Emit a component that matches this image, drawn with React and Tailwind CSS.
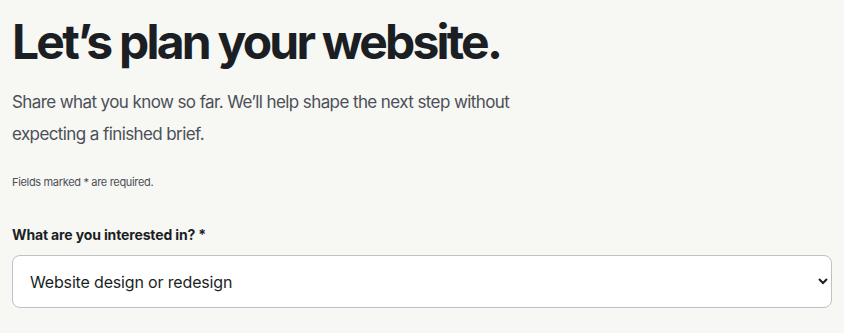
export default function App() {
  return (
    <div
      className="min-h-screen bg-[#f7f7f3] px-3 pt-[12px] text-[#1b1f24]"
      style={{ fontFamily: "Inter, 'Noto Sans', sans-serif" }}
    >
      {/* Heading */}
      <h1 className="text-[48px] font-bold leading-[60px] tracking-[-0.058em]">
        Let’s plan your website.
      </h1>

      {/* Intro */}
      <p className="mt-[14px] max-w-[560px] text-[17px] leading-[32px] tracking-[-0.035em] text-[#4b5058]">
        Share what you know so far. We’ll help shape the next step without
        expecting a finished brief.
      </p>

      <p className="mt-[24px] text-[11px] leading-[16px] tracking-[-0.03em] text-[#4b5058]">
        Fields marked * are required.
      </p>

      {/* Interest select */}
      <div className="mt-[36px]">
        <label className="block text-[14px] font-bold leading-[18px] tracking-[-0.01em] text-[#1b1f24]">
          What are you interested in? *
        </label>
        <select className="mt-[11px] h-[53px] w-full rounded-lg border border-[#bfc2c0] bg-white pl-[13px] pr-3 text-[16px] tracking-[-0.01em] text-[#1b1f24]">
          <option>Website design or redesign</option>
          <option>New website</option>
          <option>Something else</option>
        </select>
      </div>
    </div>
  );
}
